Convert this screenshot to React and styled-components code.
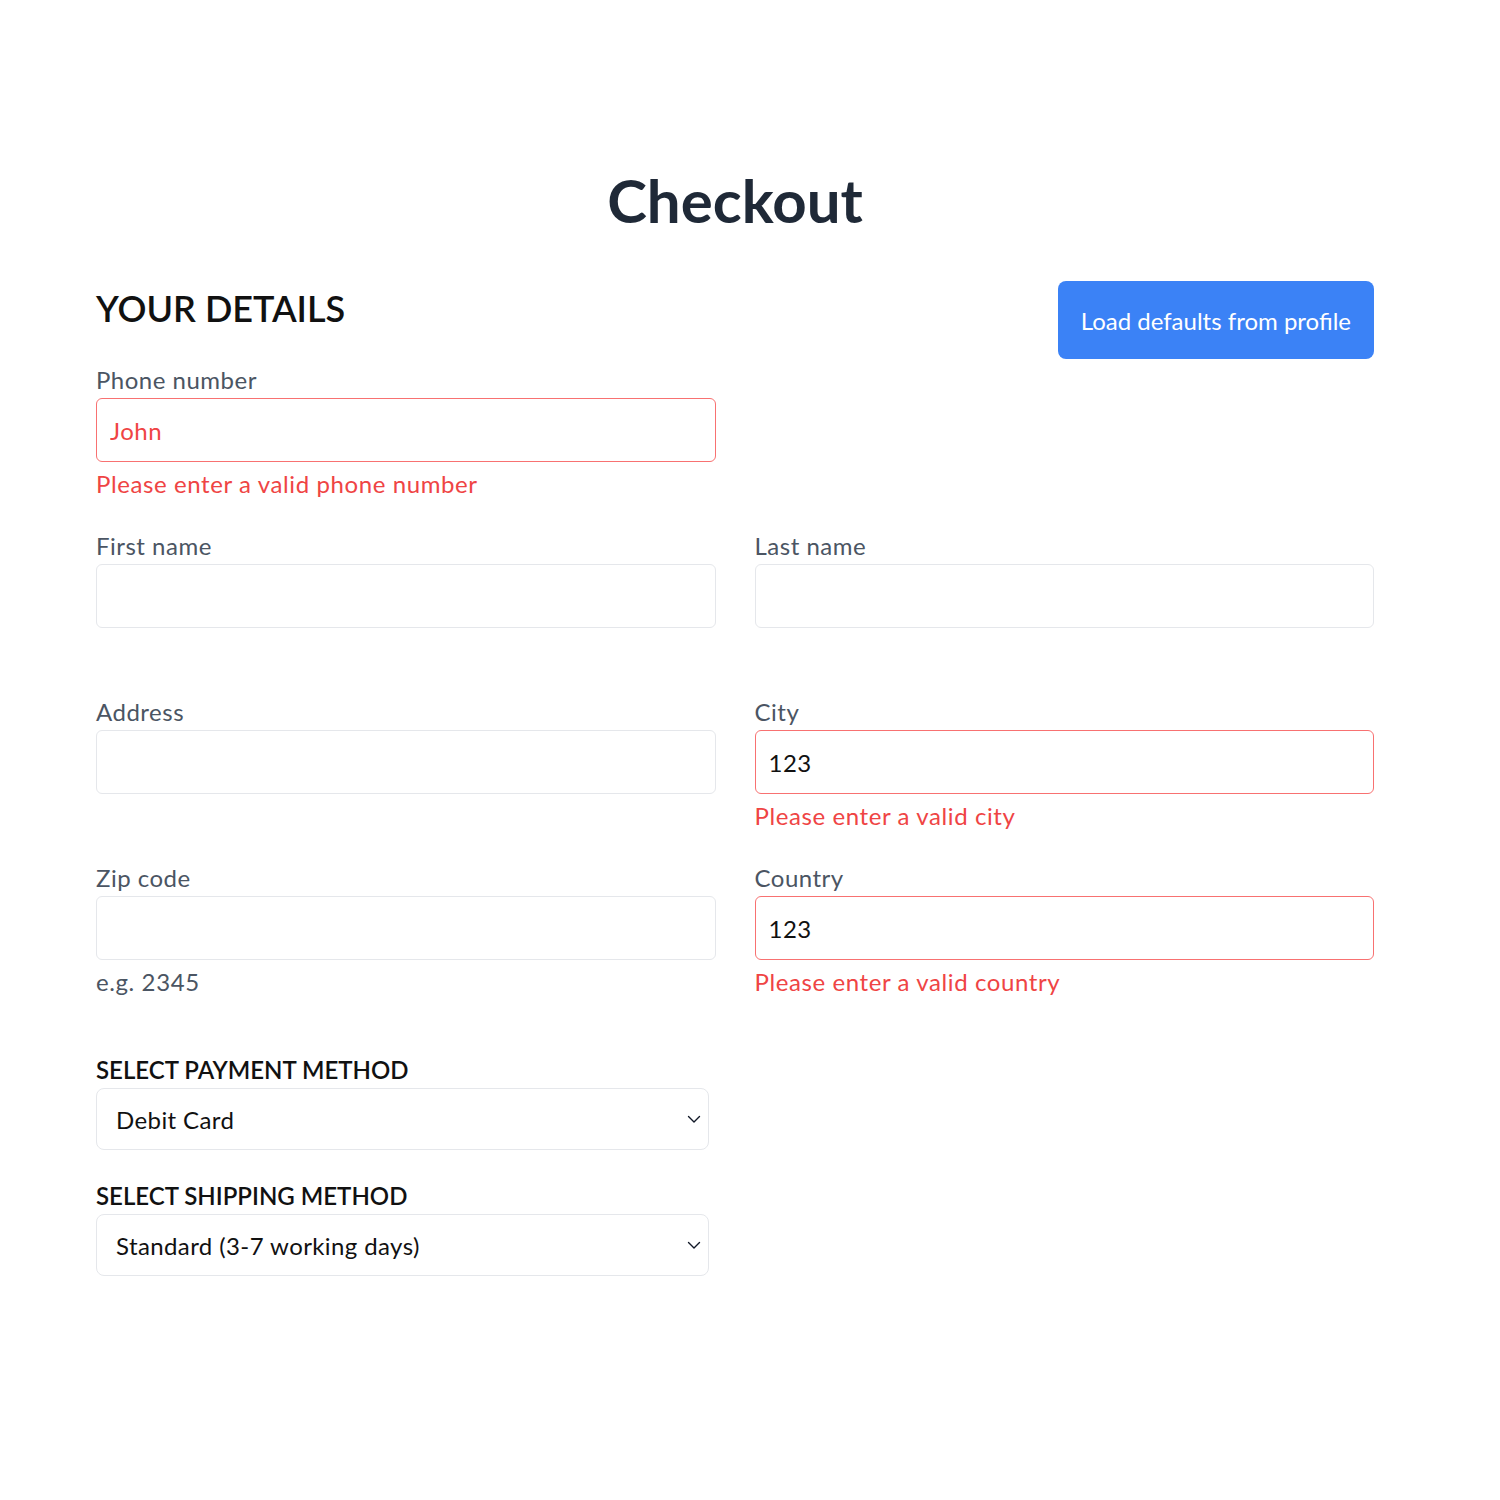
import React from 'react'
import styled, { createGlobalStyle } from 'styled-components'

const GlobalStyle = createGlobalStyle`
  body {
    margin: 0;
    background: #ffffff;
    font-family: Lato, "Noto Sans", sans-serif;
  }
  * { box-sizing: border-box; }
`

const Page = styled.div`
  width: 1278px;
  margin-left: 96px;
  padding-top: 158px;
  padding-bottom: 200px;
`

const Title = styled.h1`
  margin: 0;
  text-align: center;
  font-size: 60px;
  line-height: 84px;
  font-weight: 700;
  color: #1f2937;
`

const Header = styled.div`
  margin-top: 39px;
  display: flex;
  justify-content: space-between;
  align-items: flex-start;
`

const SectionTitle = styled.h2`
  margin: 0;
  font-size: 36px;
  line-height: 54px;
  font-weight: 600;
  color: #111111;
`

const Button = styled.button`
  height: 78px;
  padding: 0 23px;
  border: none;
  border-radius: 8px;
  background: #3b82f6;
  color: #ffffff;
  font-family: inherit;
  font-size: 24px;
  cursor: pointer;
`

const FieldGrid = styled.div`
  margin-top: 3px;
  display: grid;
  grid-template-columns: 1fr 1fr;
  column-gap: 39px;
  row-gap: 26px;
`

const Field = styled.div`
  display: flex;
  flex-direction: column;
  grid-column: ${p => (p.$alone ? '1 / 2' : 'auto')};
`

const Spacer = styled.div``

const Label = styled.label`
  font-size: 24px;
  line-height: 36px;
  letter-spacing: 0.5px;
  color: #4b5563;
`

const Input = styled.input`
  height: 64px;
  padding: 0 13px;
  border: 1px solid ${p => (p.$error ? '#f87171' : '#e5e7eb')};
  border-radius: 6px;
  font-family: inherit;
  font-size: 24px;
  letter-spacing: 0.5px;
  color: ${p => (p.$error && p.$redText ? '#ef4444' : '#111111')};
  background: #ffffff;
  outline: none;
`

const Message = styled.div`
  margin-top: 4px;
  min-height: 36px;
  font-size: 24px;
  line-height: 36px;
  letter-spacing: 0.6px;
  color: ${p => (p.$error ? '#ef4444' : '#4b5563')};
`

const SelectSection = styled.div`
  margin-top: 52px;
  width: 613px;
  display: flex;
  flex-direction: column;
`

const SelectLabel = styled.label`
  font-size: 24px;
  line-height: 36px;
  font-weight: 600;
  color: #111111;
  margin-top: ${p => (p.$first ? '0' : '28px')};
`

const SelectWrap = styled.div`
  position: relative;
`

const Select = styled.select`
  width: 100%;
  height: 62px;
  padding: 0 48px 0 19px;
  border: 1px solid #e5e7eb;
  border-radius: 8px;
  background: #ffffff;
  font-family: inherit;
  font-size: 24px;
  letter-spacing: 0.4px;
  color: #111111;
  appearance: none;
  outline: none;
`

const Chevron = styled.svg`
  position: absolute;
  right: 6px;
  top: 50%;
  transform: translateY(-50%);
  pointer-events: none;
`

const ChevronIcon = () => (
  <Chevron width="18" height="18" viewBox="0 0 18 18" fill="none">
    <path d="M3.5 6.5L9 12l5.5-5.5" stroke="#111827" strokeWidth="1.4" strokeLinecap="round" strokeLinejoin="round" />
  </Chevron>
)

const TextField = ({ label, value = '', error, hint, redText, alone }) => (
  <Field $alone={alone}>
    <Label>{label}</Label>
    <Input defaultValue={value} $error={!!error} $redText={redText} />
    <Message $error={!!error}>{error || hint || ''}</Message>
  </Field>
)

const App = () => {
  return (
    <>
      <GlobalStyle />
      <Page>
        <Title>Checkout</Title>
        <Header>
          <SectionTitle>YOUR DETAILS</SectionTitle>
          <Button>Load defaults from profile</Button>
        </Header>
        <FieldGrid>
          <TextField label="Phone number" value="John" error="Please enter a valid phone number" redText alone />
          <Spacer />
          <TextField label="First name" />
          <TextField label="Last name" />
          <TextField label="Address" />
          <TextField label="City" value="123" error="Please enter a valid city" />
          <TextField label="Zip code" hint="e.g. 2345" />
          <TextField label="Country" value="123" error="Please enter a valid country" />
        </FieldGrid>
        <SelectSection>
          <SelectLabel $first>SELECT PAYMENT METHOD</SelectLabel>
          <SelectWrap>
            <Select defaultValue="debit">
              <option value="debit">Debit Card</option>
              <option value="credit">Credit Card</option>
            </Select>
            <ChevronIcon />
          </SelectWrap>
          <SelectLabel>SELECT SHIPPING METHOD</SelectLabel>
          <SelectWrap>
            <Select defaultValue="standard">
              <option value="standard">Standard (3-7 working days)</option>
              <option value="express">Express (1-2 working days)</option>
            </Select>
            <ChevronIcon />
          </SelectWrap>
        </SelectSection>
      </Page>
    </>
  )
}

export default App
